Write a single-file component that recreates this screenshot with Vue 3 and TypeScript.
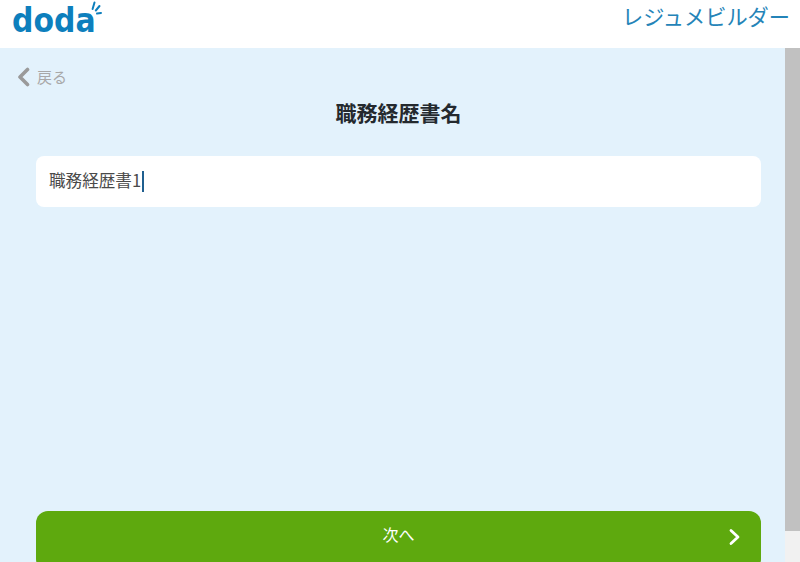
<script setup lang="ts">
const title: string = '職務経歴書名'
const resumeName: string = '職務経歴書1'
</script>

<template>
  <div class="page">
    <header class="header">
      <div class="logo">
        <span class="logo-text">doda</span>
        <svg class="spark" width="14" height="16" viewBox="0 0 14 16" aria-hidden="true">
          <path d="M5.5 1.5 L3.6 8 M10.5 5 L6.8 9.5 M12 12 L8 12.6" stroke="#0d7fbd" stroke-width="2" stroke-linecap="round" fill="none" />
        </svg>
      </div>
      <div class="product">レジュメビルダー</div>
    </header>
    <div class="body">
      <main class="content">
        <a class="back">
          <svg width="14" height="20" viewBox="0 0 14 20" aria-hidden="true">
            <path d="M11.5 2.5 L4 10 L11.5 17.5" stroke="#9a9a9a" stroke-width="3.6" fill="none" stroke-linecap="round" stroke-linejoin="round" />
          </svg>
          <span>戻る</span>
        </a>
        <h1 class="title">{{ title }}</h1>
        <div class="field">
          <span class="value">{{ resumeName }}</span><span class="caret"></span>
        </div>
        <button class="next" type="button">
          <span>次へ</span>
          <svg class="chev" width="14" height="18" viewBox="0 0 14 18" aria-hidden="true">
            <path d="M3 2.5 L10 9 L3 15.5" stroke="#ffffff" stroke-width="2.8" fill="none" stroke-linecap="round" stroke-linejoin="round" />
          </svg>
        </button>
      </main>
      <div class="scrollbar"><div class="thumb"></div></div>
    </div>
  </div>
</template>

<style>
html, body { margin: 0; overflow: hidden; }
</style>

<style scoped>
.page {
  width: 800px;
  height: 562px;
  display: flex;
  flex-direction: column;
  overflow: hidden;
  font-family: "Noto Sans CJK JP", "Noto Sans", sans-serif;
}
.header {
  height: 48px;
  flex: none;
  background: #fff;
  display: flex;
  justify-content: space-between;
  align-items: flex-start;
  padding: 0 10px 0 12px;
  box-sizing: border-box;
}
.logo { display: flex; align-items: flex-start; }
.logo-text {
  font-family: "DejaVu Sans", sans-serif;
  font-weight: 700;
  font-size: 34px;
  line-height: 40px;
  color: #0d7fbd;
  transform: scaleX(0.88);
  transform-origin: left center;
  margin-right: -11px;
}
.spark { margin: 1px 0 0 -7px; }
.product {
  font-size: 21.2px;
  line-height: 31px;
  color: #2484b8;
}
.body { flex: 1; display: flex; min-height: 0; }
.content {
  flex: 1;
  background: #e3f2fc;
  padding: 0 24px 0 36px;
  overflow: hidden;
  display: flex;
  flex-direction: column;
}
.back {
  display: flex;
  align-items: center;
  gap: 7px;
  margin: 19px 0 0 -20px;
  height: 20px;
  color: #a8a8a8;
  font-size: 15px;
  line-height: 20px;
}
.title {
  margin: 8px 0 0;
  text-align: center;
  font-size: 21px;
  line-height: 34px;
  font-weight: 700;
  color: #24292e;
}
.field {
  margin-top: 27px;
  height: 51px;
  flex: none;
  box-sizing: border-box;
  background: #fff;
  border-radius: 8px;
  padding: 0 13px;
  display: flex;
  align-items: center;
  font-size: 16.6px;
  color: #4a4a4a;
}
.value { margin-top: -3px; }
.caret {
  width: 1.5px;
  height: 21px;
  margin-left: 1px;
  background: #1f5f8f;
}
.next {
  margin-top: 304px;
  height: 60px;
  flex: none;
  border: 0;
  border-radius: 12px;
  background: #5ea90e;
  color: #fff;
  font: inherit;
  font-size: 16px;
  position: relative;
  display: flex;
  align-items: center;
  justify-content: center;
  padding: 0 0 14px;
}
.chev { position: absolute; right: 19px; top: 17px; }
.scrollbar { width: 15px; flex: none; background: #f1f1f1; }
.thumb { height: 483px; background: #c1c1c1; }
</style>
